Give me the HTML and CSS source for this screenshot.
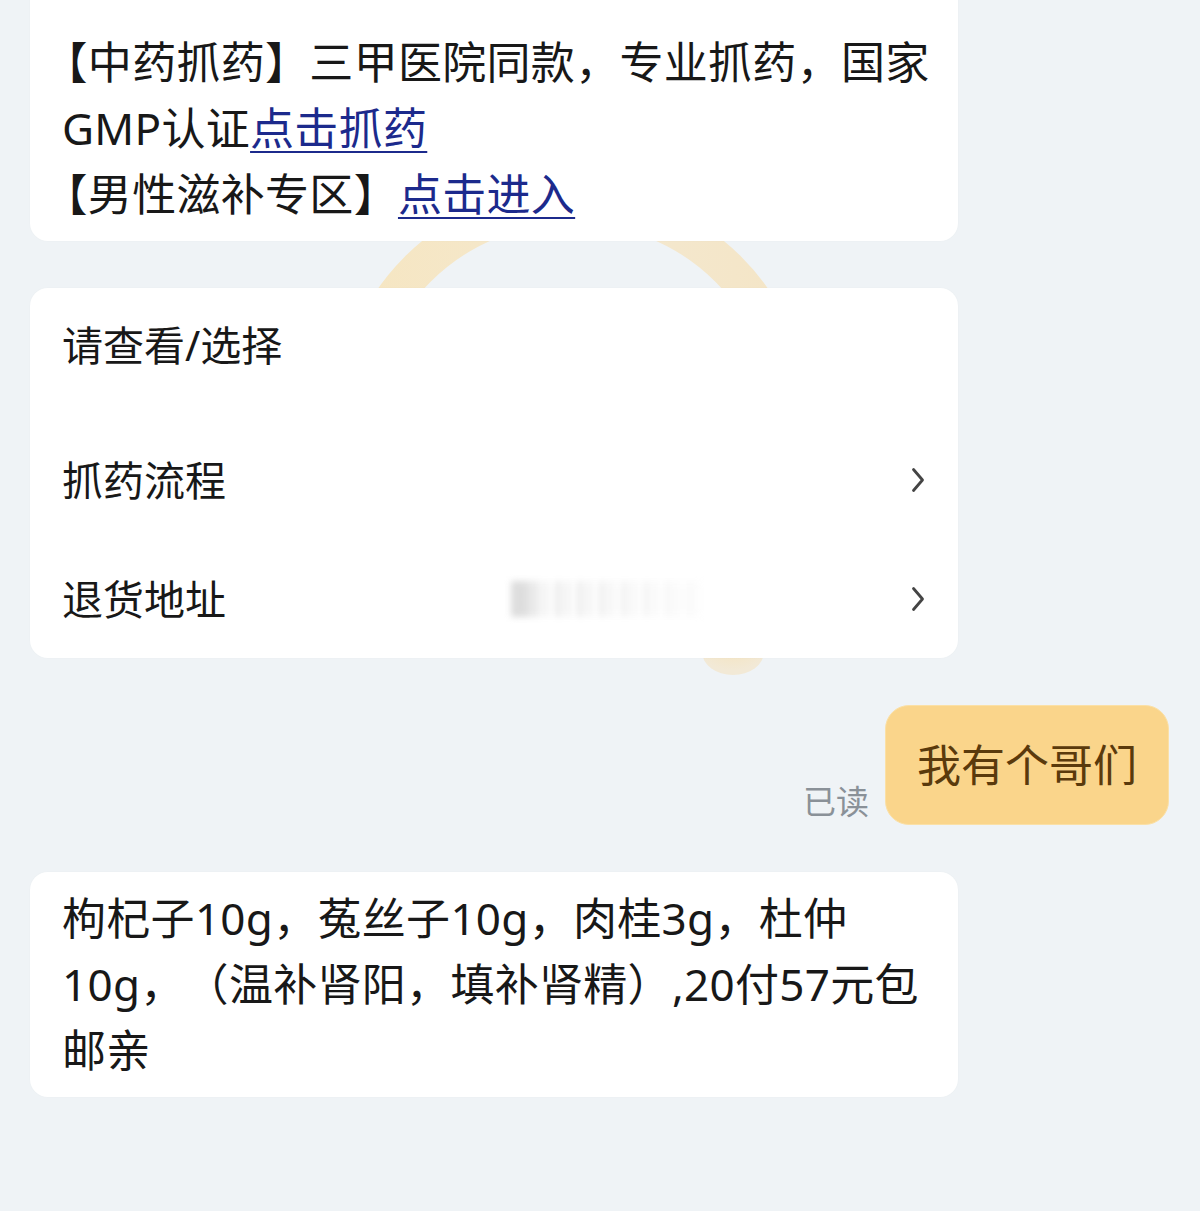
FILE: index.html
```html
<!DOCTYPE html>
<html lang="zh-CN">
<head>
<meta charset="utf-8">
<title>聊天</title>
<link rel="stylesheet" href="styles.css">
</head>
<body>
<div class="chat">
  <svg class="watermark" width="1200" height="1211" viewBox="0 0 1200 1211" aria-hidden="true">
    <defs>
      <linearGradient id="ringFade" x1="0" y1="0" x2="1" y2="0">
        <stop offset="0" stop-color="#f6e6c2"/>
        <stop offset="0.6" stop-color="#f4e8cf"/>
        <stop offset="1" stop-color="#f4e5c6"/>
      </linearGradient>
      <radialGradient id="blobFade" cx="0.5" cy="0.3" r="0.6">
        <stop offset="0" stop-color="#f5e3bb"/>
        <stop offset="1" stop-color="#f2e9d6"/>
      </radialGradient>
    </defs>
    <path d="M353 425 A220 220 0 0 1 793 425" fill="none" stroke="url(#ringFade)" stroke-width="36"/>
    <ellipse cx="733" cy="652" rx="31" ry="23" fill="url(#blobFade)"/>
  </svg>

  <div class="card card-first">
    <p class="text"><span class="lead">【</span>中药抓药】三甲医院同款，专业抓药，国家<br>GMP认证<a class="link" href="#">点击抓药</a><br><span class="lead">【</span>男性滋补专区】<a class="link" href="#">点击进入</a></p>
  </div>

  <div class="card menu">
    <div class="menu-title">请查看/选择</div>
    <div class="menu-row">
      <span class="menu-label">抓药流程</span>
      <svg class="chevron" width="14" height="26" viewBox="0 0 14 26"><path d="M2.5 2.5 L11.5 13 L2.5 23.5" fill="none" stroke="#444444" stroke-width="2.8" stroke-linecap="round" stroke-linejoin="round"/></svg>
    </div>
    <div class="menu-row">
      <span class="menu-label">退货地址</span>
      <span class="redacted"></span>
      <svg class="chevron" width="14" height="26" viewBox="0 0 14 26"><path d="M2.5 2.5 L11.5 13 L2.5 23.5" fill="none" stroke="#444444" stroke-width="2.8" stroke-linecap="round" stroke-linejoin="round"/></svg>
    </div>
  </div>

  <div class="outgoing">
    <span class="read">已读</span>
    <div class="bubble">我有个哥们</div>
  </div>

  <div class="card card-last">
    <p class="text">枸杞子10g，菟丝子10g，肉桂3g，杜仲<br>10g，（温补肾阳，填补肾精）,20付57元包<br>邮亲</p>
  </div>
</div>
</body>
</html>
```

FILE: styles.css
```css
html, body {
  margin: 0;
  padding: 0;
}

body {
  background: #eff3f6;
  width: 1200px;
  height: 1211px;
  overflow: hidden;
  font-family: "Noto Sans", "Noto Sans CJK SC", sans-serif;
  color: #181818;
  text-spacing-trim: space-all;
}

.chat {
  position: relative;
  padding: 0 31px 0 30px;
  display: flex;
  flex-direction: column;
}

.watermark {
  position: absolute;
  left: 0;
  top: 0;
  z-index: 0;
}

.card {
  position: relative;
  z-index: 1;
  background: #ffffff;
  border-radius: 18px;
  width: 928px;
  box-sizing: border-box;
  box-shadow: 0 0 2px rgba(0, 0, 0, 0.03);
}

.text {
  margin: 0;
  font-size: 44px;
  line-height: 66px;
  letter-spacing: 0.3px;
  white-space: nowrap;
}

.lead {
  margin-left: -0.42em;
}

.link {
  color: #1c2a8c;
  text-decoration: underline;
  text-decoration-thickness: 2px;
  text-underline-offset: 6px;
}

.card-first {
  margin-top: -30px;
  padding: 59px 28px 14px 32px;
}

.menu {
  margin-top: 47px;
  padding: 24px 32px 0;
}

.menu-title {
  font-size: 41px;
  line-height: 66px;
}

.menu-row {
  height: 119px;
  display: flex;
  align-items: center;
  font-size: 41px;
}

.menu-title + .menu-row {
  margin-top: 42px;
}

.menu-label {
  line-height: 66px;
}

.chevron {
  margin-left: auto;
  margin-right: 1px;
}

.redacted {
  margin-left: 285px;
  width: 190px;
  height: 36px;
  background:
    linear-gradient(90deg, rgba(255,255,255,0) 0, rgba(255,255,255,0.2) 40%, rgba(255,255,255,0.8) 100%),
    linear-gradient(90deg, #cfcfcf 0 8%, rgba(255,255,255,0) 14%),
    repeating-linear-gradient(90deg, #e2e2e2 0 6px, #f6f6f6 6px 11px, #eaeaea 11px 15px, #fdfdfd 15px 22px);
  filter: blur(3px);
  opacity: 0.7;
}

.outgoing {
  position: relative;
  z-index: 1;
  margin-top: 47px;
  display: flex;
  justify-content: flex-end;
  align-items: flex-end;
  gap: 16px;
}

.read {
  font-family: "Noto Sans CJK SC", sans-serif;
  font-size: 33px;
  line-height: 40px;
  color: #8a9198;
  margin-bottom: 5px;
}

.bubble {
  background: #fad58b;
  border: 1px solid #fbe0a6;
  border-radius: 24px;
  padding: 26px 31px;
  font-size: 44px;
  line-height: 66px;
  color: #5a3a0c;
}

.card-last {
  margin-top: 47px;
  padding: 13px 32px 14px;
}
```
